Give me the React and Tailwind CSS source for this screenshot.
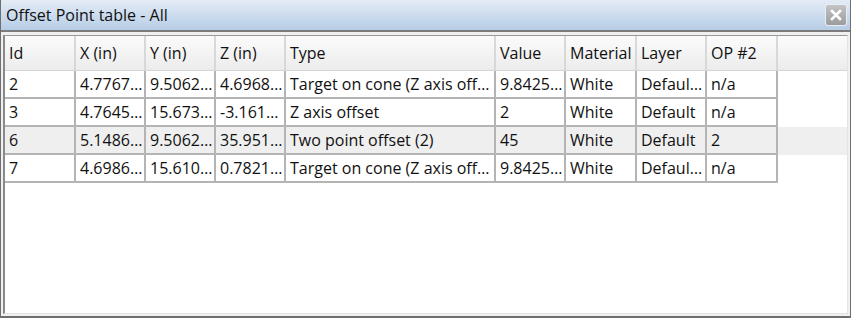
const cols = [
  { key: 'id', label: 'Id', w: 71 },
  { key: 'x', label: 'X (in)', w: 70 },
  { key: 'y', label: 'Y (in)', w: 70 },
  { key: 'z', label: 'Z (in)', w: 70 },
  { key: 'type', label: 'Type', w: 210 },
  { key: 'value', label: 'Value', w: 70 },
  { key: 'material', label: 'Material', w: 71 },
  { key: 'layer', label: 'Layer', w: 70 },
  { key: 'op', label: 'OP #2', w: 71 },
];

const rows = [
  { id: '2', x: '4.7767…', y: '9.5062…', z: '4.6968…', type: 'Target on cone (Z axis off…', value: '9.8425…', material: 'White', layer: 'Defaul…', op: 'n/a' },
  { id: '3', x: '4.7645…', y: '15.673…', z: '-3.161…', type: 'Z axis offset', value: '2', material: 'White', layer: 'Default', op: 'n/a' },
  { id: '6', x: '5.1486…', y: '9.5062…', z: '35.951…', type: 'Two point offset (2)', value: '45', material: 'White', layer: 'Default', op: '2', shade: true },
  { id: '7', x: '4.6986…', y: '15.610…', z: '0.7821…', type: 'Target on cone (Z axis off…', value: '9.8425…', material: 'White', layer: 'Defaul…', op: 'n/a' },
];

function CloseButton() {
  return (
    <div className="w-[22px] h-[22px] rounded-[3px] border border-[#e8eef5] bg-gradient-to-b from-[#c4c4c4] to-[#9c9c9c] flex items-center justify-center">
      <svg width="14" height="14" viewBox="0 0 14 14">
        <path d="M3 3 L11 11 M11 3 L3 11" stroke="#ffffff" strokeWidth="2.6" strokeLinecap="square" />
      </svg>
    </div>
  );
}

export default function App() {
  return (
    <div className="w-[851px] h-[318px] bg-white flex flex-col border-l border-r border-b-2 border-[#6f6f6f] font-['Open_Sans','Noto_Sans',sans-serif] text-[#111111] overflow-hidden">
      <div className="h-[32px] shrink-0 flex items-center justify-between pl-[5px] pr-[3px] bg-gradient-to-b from-[#e4ecf6] to-[#b6cde6] border-b-2 border-[#7c7c7c]">
        <span className="text-[16px] leading-none">Offset Point table - All</span>
        <CloseButton />
      </div>
      <div className="flex-1 flex bg-[#f0f0f0] pl-[2px] pr-[2px] pt-[3px] pb-[2px]">
        <div className="flex-1 flex flex-col bg-white border-l-2 border-[#8a8a8a] border-t border-t-[#9a9a9a] border-r border-r-[#e4e4e4] border-b border-b-[#e4e4e4]">
          <div className="h-[35px] shrink-0 flex bg-gradient-to-b from-[#fbfbfb] to-[#ececec] border-b border-[#d6d6d6]">
            {cols.map(c => (
              <div key={c.key} style={{ width: c.w }} className="shrink-0 border-r-2 border-[#d8d8d8] pl-[4px] flex items-center text-[16px] whitespace-nowrap">
                {c.label}
              </div>
            ))}
          </div>
          {rows.map(r => (
            <div key={r.id} className={`h-[28px] shrink-0 flex ${r.shade ? 'bg-[#efefef]' : 'bg-white'}`}>
              {cols.map(c => (
                <div key={c.key} style={{ width: c.w }} className="shrink-0 border-r-2 border-b-2 border-[#b4b4b4] pl-[4px] flex items-center text-[16px] whitespace-nowrap overflow-hidden">
                  {r[c.key]}
                </div>
              ))}
            </div>
          ))}
        </div>
      </div>
    </div>
  );
}
